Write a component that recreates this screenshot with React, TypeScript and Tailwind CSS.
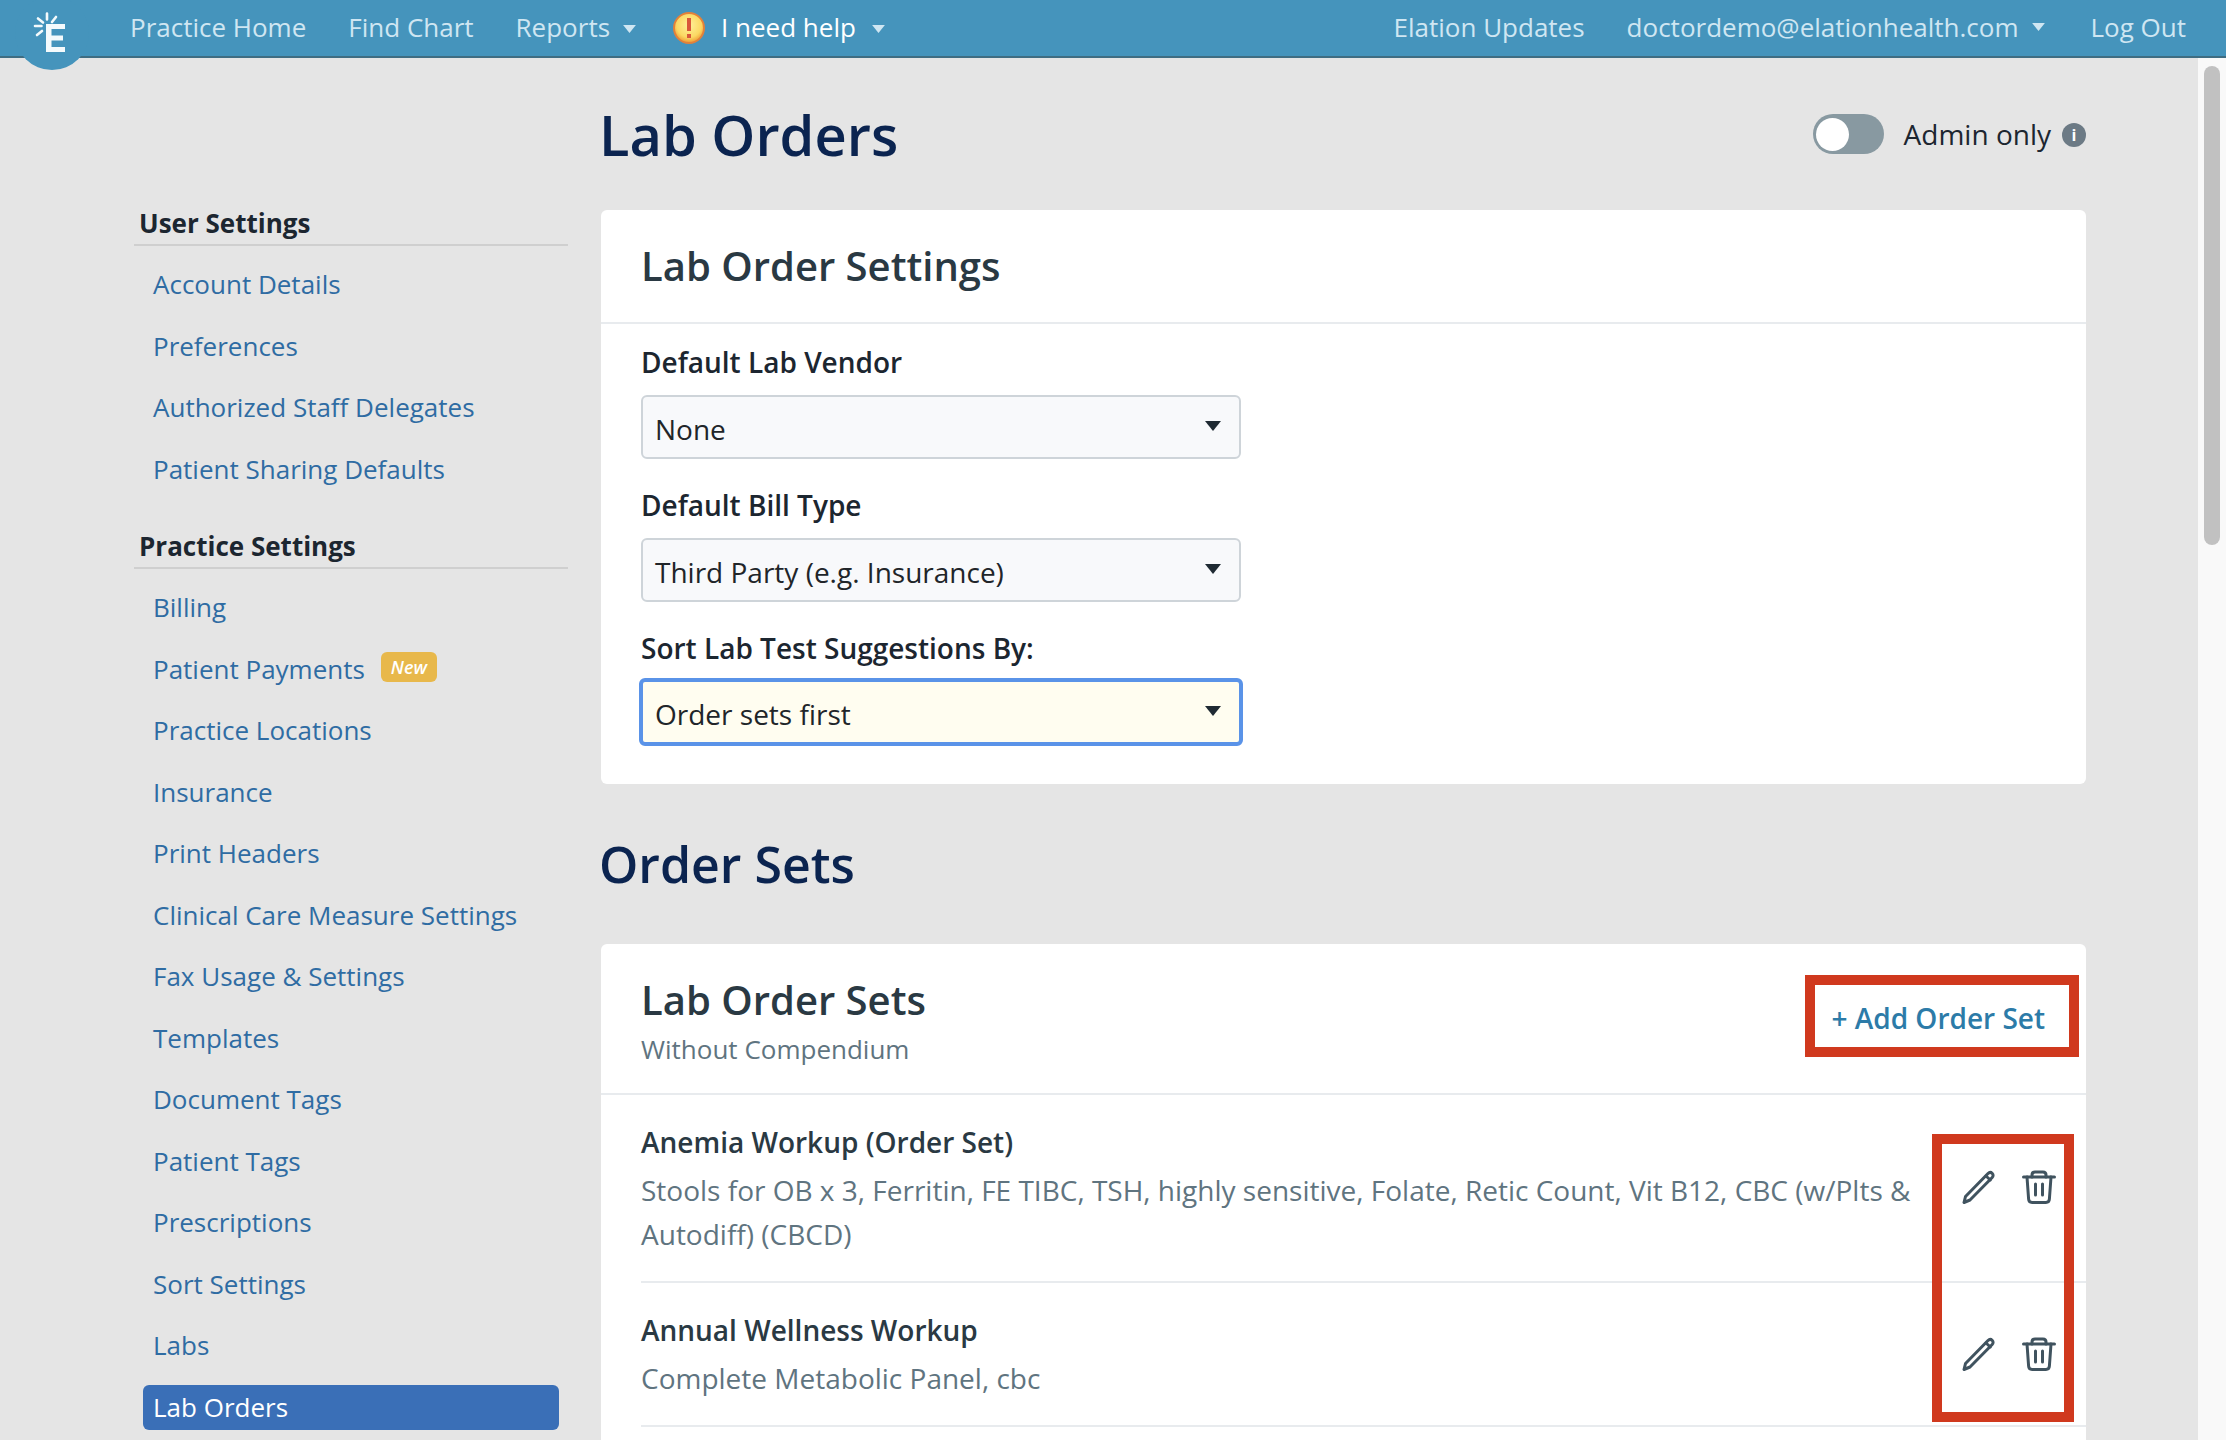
import React from "react";

const font = { fontFamily: '"Open Sans", "Noto Sans", sans-serif' };

function Caret({ cls }: { cls: string }) {
  return (
    <svg viewBox="0 0 16 10" className={cls} fill="currentColor">
      <path d="M0 0h16L8 10z" />
    </svg>
  );
}

function Logo() {
  return (
    <div className="absolute left-[15px] top-[-4px] h-[74px] w-[74px] rounded-full bg-[#4594bc]">
      <svg viewBox="0 0 74 74" className="h-[74px] w-[74px]" fill="none">
        <g stroke="#f4fafc" strokeWidth="2.6" strokeLinecap="round">
          <path d="M32 17.500v6M41 21l-4 5M23 22.500l5 4M20 30h6.500M22 39l5-4" />
        </g>
        <path d="M31 28h19v5H36.500v6.500H48v5H36.500V51H50v5H31z" fill="#f4fafc" />
      </svg>
    </div>
  );
}

function Warn() {
  return (
    <svg viewBox="0 0 32 32" className="h-[32px] w-[32px]">
      <defs>
        <radialGradient id="warnFill" cx="50%" cy="40%" r="55%">
          <stop offset="0%" stopColor="#fff09a" />
          <stop offset="75%" stopColor="#fbd863" />
          <stop offset="100%" stopColor="#f2a93f" />
        </radialGradient>
      </defs>
      <circle cx="16" cy="16" r="15" fill="url(#warnFill)" stroke="#e2813a" strokeWidth="2" />
      <rect x="14" y="6" width="4" height="13" fill="#d9573a" />
      <rect x="14" y="22" width="4" height="4" fill="#d9573a" />
    </svg>
  );
}

function Pencil() {
  return (
    <svg viewBox="0 0 34 34" className="h-[34px] w-[34px]" fill="none" stroke="#40535f" strokeWidth="3" strokeLinejoin="round" strokeLinecap="round">
      <path d="M2 32.500l1.500-6L26 3.500c1.300-1.300 3-1.300 4.200-.2s1.200 3 0 4.200L8 30z" />
      <path d="M24 6l4.300 4" />
    </svg>
  );
}

function Trash() {
  return (
    <svg viewBox="0 0 34 34" className="h-[34px] w-[34px]" fill="none" stroke="#40535f" strokeWidth="3" strokeLinejoin="round" strokeLinecap="round">
      <path d="M1.500 7h31" />
      <path d="M10 7V5c0-2 1.500-3 3-3h8c1.500 0 3 1 3 3v2" />
      <path d="M5 7l1.600 22c.1 2 1.500 3.500 3.500 3.500h13.800c2 0 3.400-1.500 3.500-3.500L29 7" />
      <path d="M13.500 14v11M20.500 14v11" />
    </svg>
  );
}

function Sel({ text, focused }: { text: string; focused?: boolean }) {
  return (
    <div
      className={
        focused
          ? "ml-[-2px] flex h-[68px] w-[604px] items-center justify-between rounded-[6px] border-[4px] border-[#5a93e8] bg-[#fffdf0] pl-[12px] pr-[18px] text-[#212529]"
          : "flex h-[64px] w-[600px] items-center justify-between rounded-[6px] border-2 border-[#ced4d9] bg-[#f8f9fb] pl-[12px] pr-[18px] text-[#212529]"
      }
    >
      <span className="pt-[4px]">{text}</span>
      <Caret cls="mb-[2px] h-[10px] w-[16px] text-[#1f2a33]" />
    </div>
  );
}

const userLinks = ["Account Details", "Preferences", "Authorized Staff Delegates", "Patient Sharing Defaults"];
const practiceLinks = [
  "Billing",
  "Patient Payments",
  "Practice Locations",
  "Insurance",
  "Print Headers",
  "Clinical Care Measure Settings",
  "Fax Usage & Settings",
  "Templates",
  "Document Tags",
  "Patient Tags",
  "Prescriptions",
  "Sort Settings",
  "Labs",
];

function SideLink({ label }: { label: string }) {
  return (
    <div className="flex h-[61.5px] items-center gap-[16px] pl-[19px] text-[#2f6ca3]">
      <span>{label}</span>
      {label === "Patient Payments" && (
        <span className="mb-[4px] flex h-[30px] w-[56px] items-center justify-center rounded-[6px] bg-[#e8b84b] text-[18px] font-semibold italic text-white">
          New
        </span>
      )}
    </div>
  );
}

function SideHead({ label }: { label: string }) {
  return (
    <div className="flex h-[43px] items-start border-b-2 border-[#cfcfcf] pl-[5px] text-[#1c2630]">
      <span className="text-[26px] font-bold leading-[40px]">{label}</span>
    </div>
  );
}

function Row({ title, lines, h }: { title: string; lines: string[]; h: string }) {
  return (
    <div className={"ml-[40px] border-b-2 border-[#e8ebee] " + h}>
      <div className="pt-[27px] text-[28px] font-semibold leading-[40px] text-[#2a3943]">{title}</div>
      <div className="pt-[6px] text-[28px] text-[#5f7480]">
        {lines.map((l) => (
          <div key={l} className="h-[44px] leading-[44px]">{l}</div>
        ))}
      </div>
    </div>
  );
}

export default function App() {
  return (
    <div style={font} className="relative flex h-[1440px] flex-col overflow-hidden bg-[#e5e5e5] text-[26px]">
      <header className="relative flex h-[58px] shrink-0 items-center justify-between border-b-2 border-[#3f6d82] bg-[#4594bc] pb-[1px] pl-[130px] pr-[40px] text-[#cfe6f2]">
        <Logo />
        <nav className="relative flex items-center">
          <span>Practice Home</span>
          <span className="ml-[42px]">Find Chart</span>
          <span className="ml-[42px]">Reports</span>
          <Caret cls="ml-[12px] mt-[2px] h-[8px] w-[15px]" />
          <span className="ml-[36px]"><Warn /></span>
          <span className="ml-[16px] text-white">I need help</span>
          <Caret cls="ml-[15px] mt-[2px] h-[8px] w-[15px]" />
        </nav>
        <nav className="flex items-center">
          <span>Elation Updates</span>
          <span className="ml-[42px]">doctordemo@elationhealth.com</span>
          <Caret cls="ml-[13px] mb-[2px] h-[8px] w-[15px]" />
          <span className="ml-[44px]">Log Out</span>
        </nav>
      </header>

      <div className="flex min-h-0 flex-1">
        <div className="flex min-w-0 flex-1">
          <aside className="ml-[134px] w-[434px] shrink-0 pt-[145px]">
            <SideHead label="User Settings" />
            <div className="pt-[8px]">
              {userLinks.map((l) => <SideLink key={l} label={l} />)}
            </div>
            <div className="pt-[26px]">
              <SideHead label="Practice Settings" />
            </div>
            <div className="pt-[8px]">
              {practiceLinks.map((l) => <SideLink key={l} label={l} />)}
            </div>
            <div className="ml-[9px] mt-[8px] flex h-[45px] w-[416px] items-center rounded-[6px] bg-[#3a6fb7] pl-[10px] text-white">
              Lab Orders
            </div>
          </aside>

          <main className="ml-[33px] w-[1485px] shrink-0">
            <div className="flex h-[152px] items-center justify-between">
              <h1 className="ml-[-2px] text-[56px] font-semibold leading-none text-[#0b2450]">Lab Orders</h1>
              <div className="flex items-center text-[28px] text-[#1c2630]">
                <div className="flex h-[40px] w-[71px] items-center rounded-full bg-[#8899a1] pl-[3px]">
                  <div className="h-[33px] w-[33px] rounded-full bg-white" />
                </div>
                <span className="ml-[20px]">Admin only</span>
                <span className="ml-[11px] mt-[1px] flex h-[24px] w-[24px] items-center justify-center rounded-full bg-[#6c7a85] text-[16px] font-bold leading-none text-white">i</span>
              </div>
            </div>

            <section className="h-[574px] rounded-[6px] bg-white">
              <div className="flex h-[114px] items-center border-b-2 border-[#e8ebee] pb-[1px] pl-[40px]">
                <h2 className="text-[40px] font-semibold leading-none text-[#2a3943]">Lab Order Settings</h2>
              </div>
              <div className="pl-[40px] text-[28px] leading-[40px]">
                <div className="pt-[18px] font-semibold text-[#1c2630]">Default Lab Vendor</div>
                <div className="pt-[13px]"><Sel text="None" /></div>
                <div className="pt-[26px] font-semibold text-[#1c2630]">Default Bill Type</div>
                <div className="pt-[13px]"><Sel text="Third Party (e.g. Insurance)" /></div>
                <div className="pt-[26px] font-semibold text-[#1c2630]">Sort Lab Test Suggestions By:</div>
                <div className="pt-[10px]"><Sel text="Order sets first" focused /></div>
              </div>
            </section>

            <h1 className="ml-[-2px] flex h-[160px] items-center text-[50px] font-semibold leading-none text-[#0b2450]">Order Sets</h1>

            <section className="rounded-[6px] bg-white pb-[60px]">
              <div className="flex h-[151px] items-start justify-between border-b-2 border-[#e8ebee] pl-[40px] pr-[41px]">
                <div>
                  <h2 className="pt-[31px] text-[40px] font-semibold leading-[50px] text-[#2a3943]">Lab Order Sets</h2>
                  <div className="pt-[2px] leading-[44px] text-[#5f7480]">Without Compendium</div>
                </div>
                <div className="pt-[54px] text-[28px] font-semibold leading-[40px] text-[#2c7ba8]">+ Add Order Set</div>
              </div>
              <div className="relative">
                <Row
                  title="Anemia Workup (Order Set)"
                  h="h-[188px]"
                  lines={[
                    "Stools for OB x 3, Ferritin, FE TIBC, TSH, highly sensitive, Folate, Retic Count, Vit B12, CBC (w/Plts &",
                    "Autodiff) (CBCD)",
                  ]}
                />
                <Row title="Annual Wellness Workup" h="h-[144px]" lines={["Complete Metabolic Panel, cbc"]} />
                <div className="absolute left-[1361px] top-[75px] flex gap-[26px]"><Pencil /><Trash /></div>
                <div className="absolute left-[1361px] top-[242px] flex gap-[26px]"><Pencil /><Trash /></div>
              </div>
            </section>
          </main>
        </div>

        <div className="w-[28px] shrink-0 bg-[#f9f9f9] pl-[6px] pt-[8px]">
          <div className="h-[479px] w-[16px] rounded-full bg-[#c1c1c1]" />
        </div>
      </div>

      <div className="absolute left-[1805px] top-[975px] h-[82px] w-[274px] border-[10px] border-[#d0391e]" />
      <div className="absolute left-[1932px] top-[1134px] h-[288px] w-[142px] border-[10px] border-[#d0391e]" />
    </div>
  );
}
